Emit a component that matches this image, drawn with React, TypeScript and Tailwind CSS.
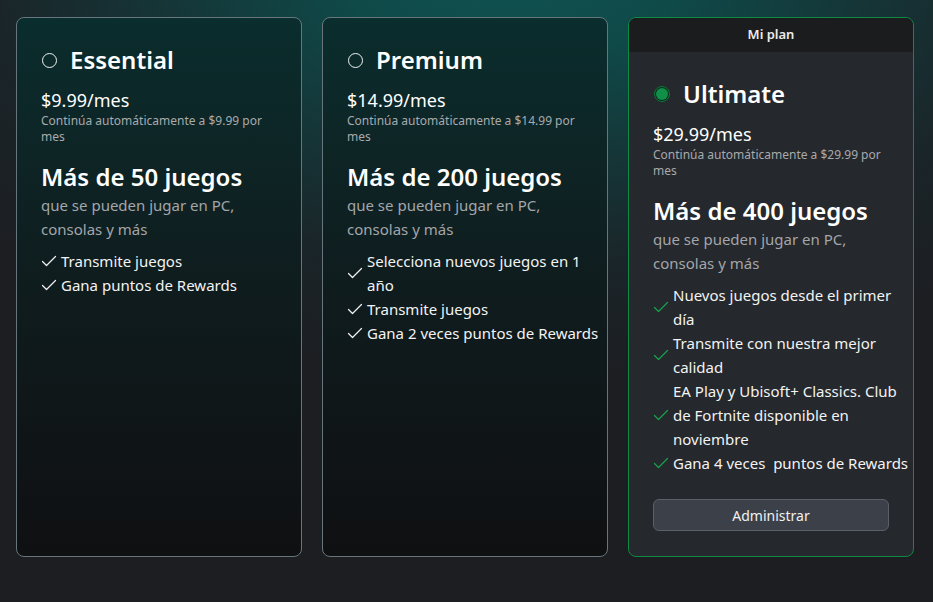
import React from 'react';

type Plan = {
  name: string;
  price: string;
  note: string;
  games: string;
  perks: string[];
  current?: boolean;
};

const plans: Plan[] = [
  {
    name: 'Essential',
    price: '$9.99/mes',
    note: 'Continúa automáticamente a $9.99 por mes',
    games: 'Más de 50 juegos',
    perks: ['Transmite juegos', 'Gana puntos de Rewards'],
  },
  {
    name: 'Premium',
    price: '$14.99/mes',
    note: 'Continúa automáticamente a $14.99 por mes',
    games: 'Más de 200 juegos',
    perks: ['Selecciona nuevos juegos en 1 año', 'Transmite juegos', 'Gana 2 veces puntos de Rewards'],
  },
  {
    name: 'Ultimate',
    price: '$29.99/mes',
    note: 'Continúa automáticamente a $29.99 por mes',
    games: 'Más de 400 juegos',
    perks: [
      'Nuevos juegos desde el primer día',
      'Transmite con nuestra mejor calidad',
      'EA Play y Ubisoft+ Classics. Club de Fortnite disponible en noviembre',
      'Gana 4 veces\u00a0 puntos de Rewards',
    ],
    current: true,
  },
];

function Check({ green }: { green?: boolean }) {
  return (
    <svg width="16" height="12" viewBox="0 0 16 12" fill="none" className="shrink-0">
      <path
        d="M1.5 6.5 L5.5 10.5 L14.5 1.5"
        stroke={green ? '#16a34a' : '#f2f2f2'}
        strokeWidth="1.2"
        strokeLinecap="round"
        strokeLinejoin="round"
      />
    </svg>
  );
}

function Radio({ on }: { on?: boolean }) {
  if (on) {
    return (
      <span className="flex h-4 w-4 shrink-0 items-center justify-center rounded-full border border-[#0c7a3c] bg-[#0b2a1a]">
        <span className="h-3 w-3 rounded-full bg-[#0f8f47]" />
      </span>
    );
  }
  return <span className="h-[15px] w-[15px] shrink-0 rounded-full border-[1.5px] border-[#f2f2f2]" />;
}

function PlanCard({ plan }: { plan: Plan }) {
  const cur = plan.current;
  return (
    <div
      className={
        cur
          ? 'flex w-[286px] flex-col overflow-hidden rounded-lg border border-[#0e8a44] bg-[#25282c]'
          : 'flex w-[286px] flex-col overflow-hidden rounded-lg border border-[#66767c] bg-gradient-to-b from-[#0a2d2d] via-[#0f1c1e] to-[#0f1012]'
      }
    >
      {cur && (
        <div className="flex h-[34px] items-center justify-center bg-[#1b1c1e] text-[13px] font-semibold text-[#ececec]">
          Mi plan
        </div>
      )}
      <div className="flex flex-1 flex-col pb-6 pl-6 pr-5 pt-[27px]">
        <div className="flex h-[30px] items-center gap-[13px] pl-px">
          <Radio on={cur} />
          <span className="text-[24px] font-semibold leading-[30px] text-white">{plan.name}</span>
        </div>
        <div className="mt-[13px] text-[18px] leading-6 text-white">{plan.price}</div>
        <div className="mt-px w-[236px] text-[12px] leading-4 text-[#a7aaae]">{plan.note}</div>
        <div className="mt-4 text-[24px] font-semibold leading-8 text-white">{plan.games}</div>
        <div className="text-[15px] leading-6 text-[#a3a6aa]">
          que se pueden jugar en PC,
          <br />
          consolas y más
        </div>
        <ul className="mt-2 -mr-6 flex flex-col">
          {plan.perks.map((p) => (
            <li key={p} className="flex items-center gap-1 text-[15px] leading-6 text-[#f3f3f3]">
              <Check green={cur} />
              <span className="w-[240px]">{p}</span>
            </li>
          ))}
        </ul>
        {cur && (
          <button className="mt-6 h-[32px] w-[236px] rounded-md border border-[#5b5f67] bg-[#3c4048] text-[14px] text-[#f0f0f0]">
            Administrar
          </button>
        )}
      </div>
    </div>
  );
}

export default function App() {
  return (
    <div
      className="flex h-[602px] w-[933px] items-stretch gap-5 overflow-hidden bg-[#1c1e22] bg-[radial-gradient(ellipse_75%_70%_at_55%_-8%,#0f5452_0%,#0f4a49_25%,#153638_50%,#1a2529_75%,#1c1e22_100%)] pb-[45px] pl-4 pt-[17px]"
      style={{ fontFamily: '"Noto Sans", "Open Sans", sans-serif' }}
    >
      {plans.map((p) => (
        <PlanCard key={p.name} plan={p} />
      ))}
    </div>
  );
}
